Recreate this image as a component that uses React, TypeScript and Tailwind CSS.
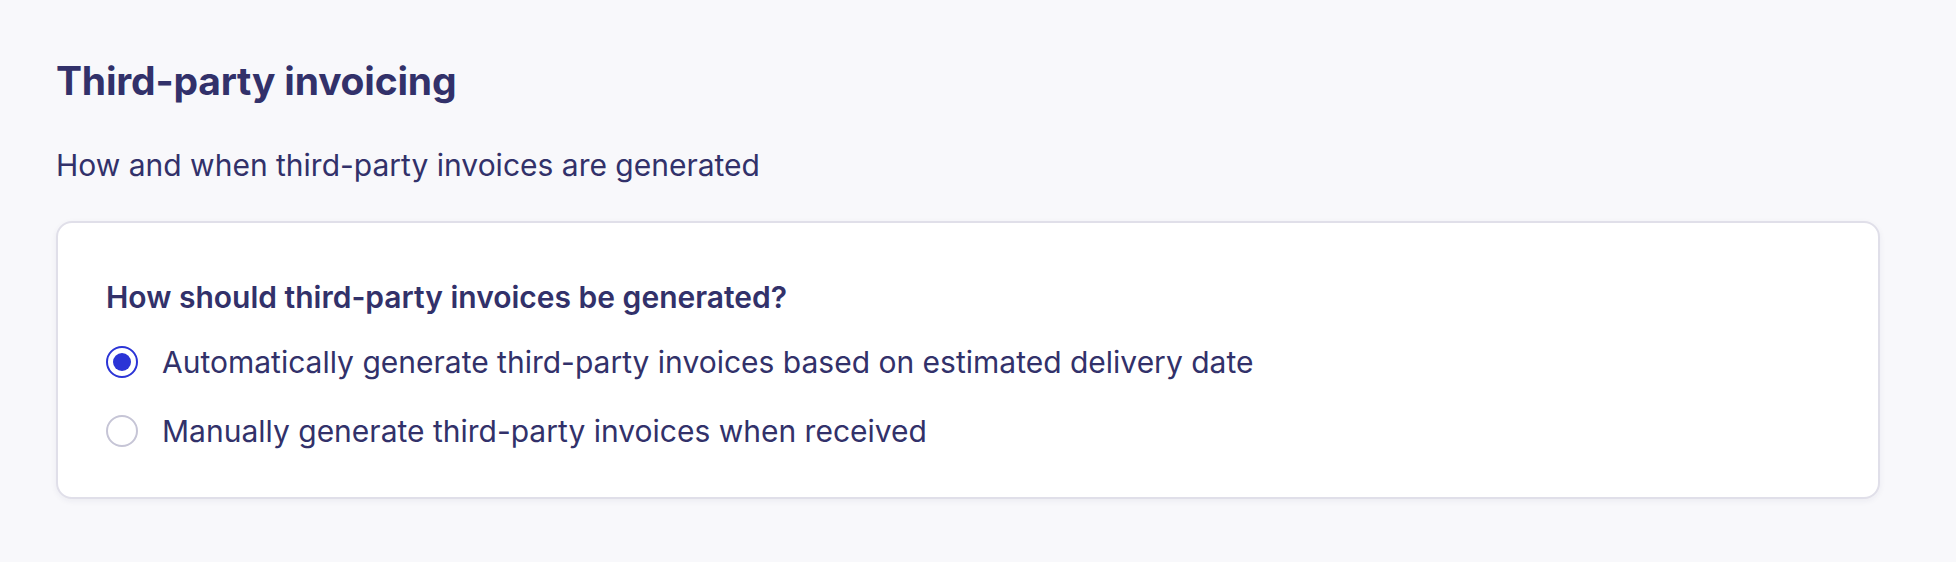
import React, { useState } from 'react';

const options = [
  { id: 'auto', label: 'Automatically generate third-party invoices based on estimated delivery date' },
  { id: 'manual', label: 'Manually generate third-party invoices when received' },
];

function Radio({ checked }: { checked: boolean }) {
  return (
    <span
      className={
        checked
          ? 'w-[32px] h-[32px] rounded-full border-[2px] border-[#2b34d6] bg-white flex items-center justify-center shrink-0'
          : 'w-[32px] h-[32px] rounded-full border-[2px] border-[#c6c5d6] bg-white flex items-center justify-center shrink-0'
      }
    >
      {checked && <span className="w-[18px] h-[18px] rounded-full bg-[#2b34d6]" />}
    </span>
  );
}

export default function App() {
  const [value, setValue] = useState('auto');

  return (
    <div
      className="min-h-[562px] bg-[#f8f8fb] pt-[59px] pl-[56px] pr-[76px] text-[#32316a]"
      style={{ fontFamily: 'Inter, "Noto Sans", sans-serif' }}
    >
      <h2 className="text-[39px] leading-[44px] font-bold tracking-[-0.2px]">Third-party invoicing</h2>
      <p className="mt-[42px] text-[30px] leading-[40px]">How and when third-party invoices are generated</p>

      <div className="mt-[36px] bg-white border-[2px] border-[#e0dfe9] rounded-[16px] shadow-[0_2px_6px_rgba(40,40,90,0.06)] pl-[48px] pr-[48px] pt-[54px] pb-[46px]">
        <div className="text-[30px] leading-[40px] font-semibold">How should third-party invoices be generated?</div>
        <div className="mt-[25px] flex flex-col gap-[29px]">
          {options.map((o) => (
            <label
              key={o.id}
              className="flex items-center gap-[24px] h-[40px] cursor-pointer"
              onClick={() => setValue(o.id)}
            >
              <Radio checked={value === o.id} />
              <span className="text-[30px] leading-[40px]">{o.label}</span>
            </label>
          ))}
        </div>
      </div>
    </div>
  );
}
